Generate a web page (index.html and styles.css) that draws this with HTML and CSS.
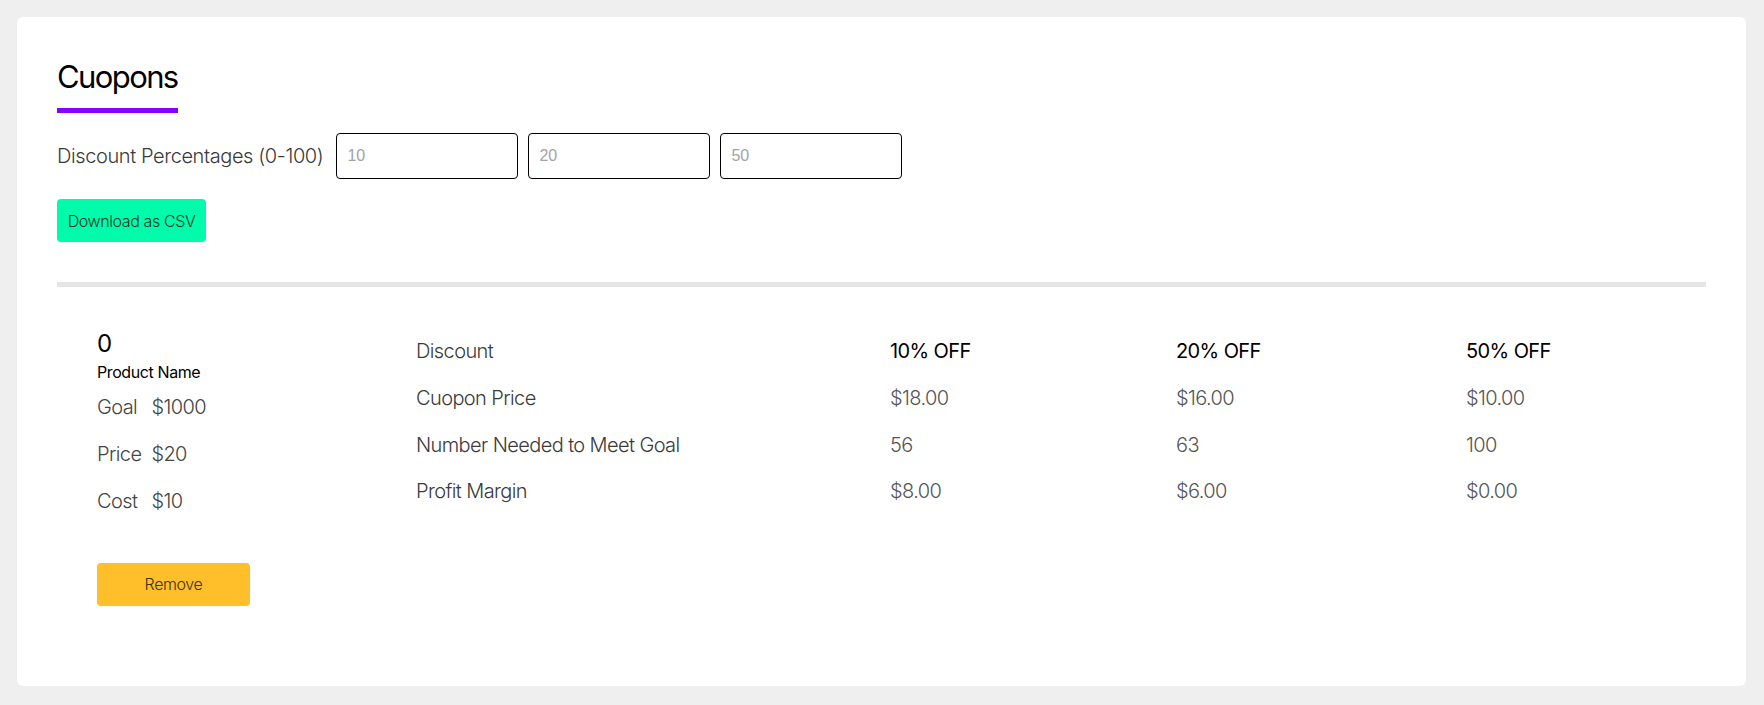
FILE: index.html
```html
<!DOCTYPE html>
<html lang="en">
<head>
<meta charset="utf-8">
<title>Cuopons</title>
<link rel="stylesheet" href="styles.css">
</head>
<body>
<div class="page">
  <main class="card">
    <h1 class="title">Cuopons</h1>
    <div class="filter-row">
      <label class="filter-label">Discount Percentages (0-100)</label>
      <input class="pct-input" type="text" placeholder="10">
      <input class="pct-input" type="text" placeholder="20">
      <input class="pct-input" type="text" placeholder="50">
    </div>
    <button class="btn btn-csv">Download as CSV</button>
    <hr class="divider">
    <section class="product">
      <div class="product-info">
        <div class="product-id">0</div>
        <div class="product-name">Product Name</div>
        <div class="info-grid">
          <span class="info-label">Goal</span><span class="info-value">$1000</span>
          <span class="info-label">Price</span><span class="info-value">$20</span>
          <span class="info-label">Cost</span><span class="info-value">$10</span>
        </div>
        <button class="btn btn-remove">Remove</button>
      </div>
      <div class="coupon-table">
        <span class="row-label">Discount</span>
        <span class="col-head">10% OFF</span>
        <span class="col-head">20% OFF</span>
        <span class="col-head">50% OFF</span>

        <span class="row-label">Cuopon Price</span>
        <span class="cell">$18.00</span>
        <span class="cell">$16.00</span>
        <span class="cell">$10.00</span>

        <span class="row-label">Number Needed to Meet Goal</span>
        <span class="cell">56</span>
        <span class="cell">63</span>
        <span class="cell">100</span>

        <span class="row-label">Profit Margin</span>
        <span class="cell">$8.00</span>
        <span class="cell">$6.00</span>
        <span class="cell">$0.00</span>
      </div>
    </section>
  </main>
</div>
</body>
</html>
```

FILE: styles.css
```css
* {
  box-sizing: border-box;
}

html, body {
  margin: 0;
  padding: 0;
  background: #efefef;
}

body {
  font-family: Inter, "Noto Sans", sans-serif;
  font-weight: 300;
  color: #333;
  letter-spacing: -0.6px;
}

.page {
  padding: 17px 18px 17px 17px;
}

.card {
  background: #ffffff;
  border-radius: 6px;
  padding: 40px;
}

.title {
  display: inline-block;
  margin: 0;
  font-size: 31px;
  line-height: 40px;
  font-weight: 400;
  letter-spacing: -1.6px;
  color: #000;
  padding-bottom: 11px;
  border-bottom: 5px solid #8a00ff;
}

.filter-row {
  display: flex;
  align-items: center;
  margin-top: 20px;
}

.filter-label {
  font-size: 20px;
  letter-spacing: -0.4px;
  color: #3a3a3a;
  margin-right: 13px;
}

.pct-input {
  width: 182px;
  height: 46px;
  border: 1px solid #000;
  border-radius: 4px;
  padding: 0 10px;
  margin: 0 10px 0 0;
  font-family: "Liberation Sans", Arial, sans-serif;
  font-size: 16px;
  letter-spacing: 0;
  background: #fff;
  outline: none;
}

.pct-input::placeholder {
  color: #a3a3a3;
}

.btn {
  display: block;
  border: none;
  border-radius: 4px;
  height: 43px;
  font-family: Inter, "Noto Sans", sans-serif;
  font-weight: 300;
  font-size: 16px;
  letter-spacing: -0.4px;
  color: #222;
  cursor: pointer;
}

.btn-csv {
  margin-top: 20px;
  width: 149px;
  padding: 0;
  background: #00fcab;
  color: #0b3a27;
}

.divider {
  margin: 40px 0 0 0;
  height: 5px;
  border: none;
  background: #e5e5e5;
}

.product {
  display: flex;
  padding: 41px 40px 40px;
}

.product-info {
  width: 319px;
  flex: none;
}

.product-id {
  font-size: 24px;
  line-height: 32px;
  font-weight: 400;
  color: #000;
}

.product-name {
  font-size: 16px;
  line-height: 24px;
  font-weight: 400;
  letter-spacing: -0.4px;
  color: #000;
}

.info-grid {
  display: grid;
  grid-template-columns: auto 1fr;
  column-gap: 10px;
  grid-auto-rows: 46.67px;
  align-items: center;
  font-size: 20px;
  color: #444;
}

.btn-remove {
  margin-top: 39px;
  width: 153px;
  background: #ffbf2b;
  color: #3b3212;
}

.coupon-table {
  flex: 1;
  display: grid;
  grid-template-columns: 474px 286px 290px 1fr;
  grid-auto-rows: 46.67px;
  align-items: center;
  font-size: 20px;
}

.row-label {
  color: #3a3a3a;
}

.col-head {
  color: #000;
  font-weight: 400;
}

.cell {
  color: #555;
}
```
